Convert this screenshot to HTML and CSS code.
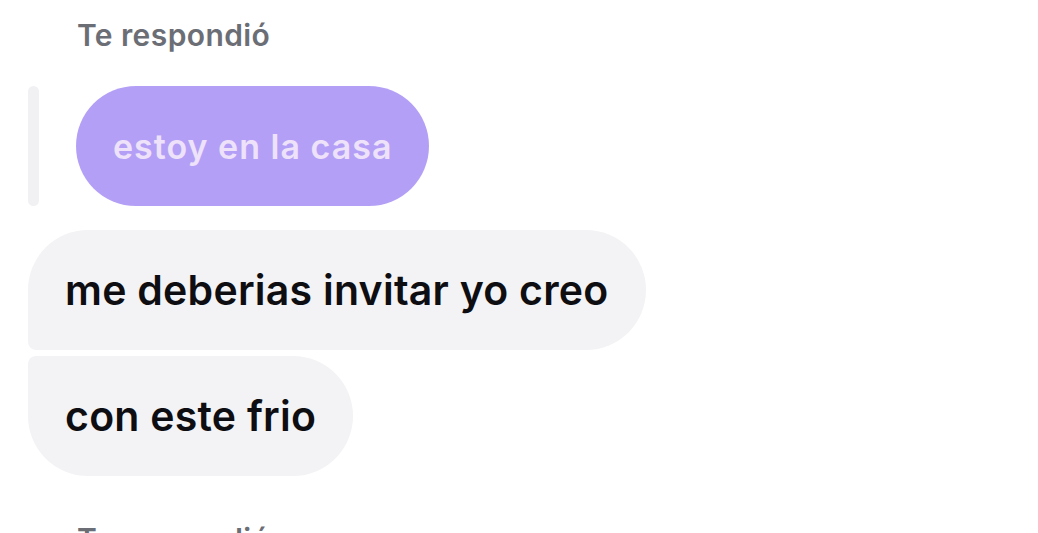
FILE: index.html
```html
<!DOCTYPE html>
<html lang="es">
<head>
    <meta charset="UTF-8">
    <meta name="viewport" content="width=device-width, initial-scale=1.0">
    <title>Chat</title>
    <link rel="stylesheet" href="styles.css">
</head>
<body>

    <div class="chat">
        <p class="reply-label">Te respondió</p>
        <div class="reply">
            <div class="reply-bar"></div>
            <div class="bubble quoted">estoy en la casa</div>
        </div>

        <div class="group">
            <div class="bubble msg first">me deberias invitar yo creo</div>
            <div class="bubble msg last">con este frio</div>
        </div>

        <p class="reply-label">Te respondió</p>
    </div>

</body>
</html>
```

FILE: styles.css
```css
* {
    margin: 0;
    padding: 0;
    box-sizing: border-box;
    font-family: "Inter", "Noto Sans", sans-serif;
}

body {
    background: #ffffff;
    overflow: hidden;
}

.chat {
    padding: 18px 0 0 28px;
    display: flex;
    flex-direction: column;
    align-items: flex-start;
}

.reply-label {
    margin-left: 49px;
    font-size: 30px;
    font-weight: 600;
    letter-spacing: 0.4px;
    color: #6c6e76;
    line-height: 34px;
}

.reply {
    display: flex;
    gap: 37px;
    margin-top: 34px;
}

.reply-bar {
    width: 11px;
    border-radius: 6px;
    background: #f1f1f4;
}

.bubble {
    height: 120px;
    display: flex;
    align-items: center;
    padding: 0 37px;
    border-radius: 60px;
    font-size: 41px;
    font-weight: 600;
    letter-spacing: 0.25px;
    white-space: nowrap;
}

.quoted {
    background: #b49ff6;
    color: #ede2f9;
    font-size: 34px;
    letter-spacing: 1px;
}

.group {
    display: flex;
    flex-direction: column;
    align-items: flex-start;
    gap: 6px;
    margin-top: 24px;
    margin-bottom: 46px;
}

.msg {
    background: #f3f3f5;
    color: #0e0e12;
}

.msg.first {
    border-bottom-left-radius: 8px;
}

.msg.last {
    border-top-left-radius: 8px;
}
```
